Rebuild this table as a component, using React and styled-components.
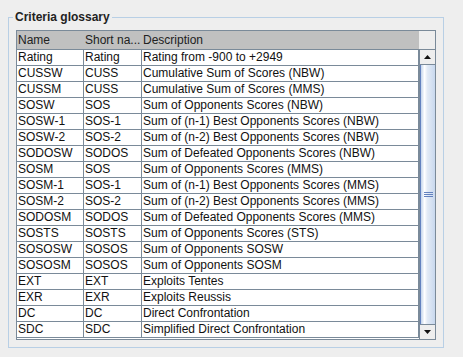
import React from "react";
import styled, { createGlobalStyle } from "styled-components";

const GlobalStyle = createGlobalStyle`
  html, body { margin: 0; padding: 0; background: #eeeeee; }
  body { font-family: "Liberation Sans", Arial, sans-serif; }
`;

const Page = styled.div`
  padding: 10px 0 0 8px;
`;

const Group = styled.fieldset`
  box-sizing: border-box;
  width: 436px;
  margin: 0;
  min-width: 0;
  border: 1px solid #b8cfe5;
  padding: 6px 7px 7px 7px;
`;

const Title = styled.legend`
  font: bold 12px/14px "Liberation Sans", Arial, sans-serif;
  color: #222;
  padding: 0 2px;
  margin-left: -3px;
`;

const ScrollPane = styled.div`
  display: grid;
  grid-template-columns: 402px 16px;
  grid-template-rows: 18px 290px;
  border: 1px solid #7a8a99;
  overflow: hidden;
`;

const Header = styled.div`
  display: grid;
  grid-template-columns: 67px 58px 1fr;
  background: #c0c0c0;
`;

const HeadCell = styled.div`
  font-size: 12px;
  line-height: 18px;
  color: #222;
  padding-left: 1px;
  white-space: nowrap;
  overflow: hidden;
`;

const Corner = styled.div`
  background: #eeeeee;
`;

const Body = styled.div`
  background: #ffffff;
  border-top: 1px solid #7a8a99;
  overflow: hidden;
`;

const Row = styled.div`
  display: grid;
  grid-template-columns: 67px 58px 1fr;
  height: 16px;
  box-sizing: border-box;
  border-bottom: 1px solid #7a8a99;
`;

const Cell = styled.div`
  font-size: 12px;
  line-height: 15px;
  color: #111;
  padding-left: 1px;
  border-right: 1px solid #7a8a99;
  white-space: nowrap;
  overflow: hidden;
`;

const ScrollBar = styled.div`
  display: flex;
  flex-direction: column;
  border-top: 1px solid #7a8a99;
  border-left: 1px solid #7a8a99;
  background: #eeeeee;
`;

const ArrowButton = styled.div`
  height: 15px;
  flex: none;
  box-sizing: border-box;
  display: flex;
  align-items: center;
  justify-content: center;
  background: #eeeeee;
  border-bottom: ${(p) => (p.$up ? "1px solid #7a8a99" : "none")};
  border-top: ${(p) => (p.$up ? "none" : "1px solid #7a8a99")};
`;

const Thumb = styled.div`
  flex: 1;
  box-sizing: border-box;
  border-left: 1px solid #6382bf;
  background: linear-gradient(to right, #c3d4ec 0%, #ffffff 25%, #e3ebf6 45%, #c8d8ee 100%);
  display: flex;
  align-items: center;
  justify-content: center;
`;

const Grip = styled.div`
  width: 9px;
  height: 5px;
  background: repeating-linear-gradient(to bottom, #6382bf 0 1px, transparent 1px 2px);
`;

const rows = [
  ["Rating", "Rating", "Rating from -900 to +2949"],
  ["CUSSW", "CUSS", "Cumulative Sum of Scores (NBW)"],
  ["CUSSM", "CUSS", "Cumulative Sum of Scores (MMS)"],
  ["SOSW", "SOS", "Sum of Opponents Scores (NBW)"],
  ["SOSW-1", "SOS-1", "Sum of (n-1) Best Opponents Scores (NBW)"],
  ["SOSW-2", "SOS-2", "Sum of (n-2) Best Opponents Scores (NBW)"],
  ["SODOSW", "SODOS", "Sum of Defeated Opponents Scores (NBW)"],
  ["SOSM", "SOS", "Sum of Opponents Scores (MMS)"],
  ["SOSM-1", "SOS-1", "Sum of (n-1) Best Opponents Scores (MMS)"],
  ["SOSM-2", "SOS-2", "Sum of (n-2) Best Opponents Scores (MMS)"],
  ["SODOSM", "SODOS", "Sum of Defeated Opponents Scores (MMS)"],
  ["SOSTS", "SOSTS", "Sum of Opponents Scores (STS)"],
  ["SOSOSW", "SOSOS", "Sum of Opponents SOSW"],
  ["SOSOSM", "SOSOS", "Sum of Opponents SOSM"],
  ["EXT", "EXT", "Exploits Tentes"],
  ["EXR", "EXR", "Exploits Reussis"],
  ["DC", "DC", "Direct Confrontation"],
  ["SDC", "SDC", "Simplified Direct Confrontation"],
];

const Triangle = ({ up }) => (
  <svg width="7" height="4" viewBox="0 0 7 4">
    <polygon points={up ? "3.5,0 7,4 0,4" : "0,0 7,0 3.5,4"} fill="#111" />
  </svg>
);

export default function App() {
  return (
    <>
      <GlobalStyle />
      <Page>
        <Group>
          <Title>Criteria glossary</Title>
          <ScrollPane>
            <Header>
              <HeadCell>Name</HeadCell>
              <HeadCell>Short na...</HeadCell>
              <HeadCell>Description</HeadCell>
            </Header>
            <Corner />
            <Body>
              {rows.map((r) => (
                <Row key={r[0]}>
                  <Cell>{r[0]}</Cell>
                  <Cell>{r[1]}</Cell>
                  <Cell>{r[2]}</Cell>
                </Row>
              ))}
            </Body>
            <ScrollBar>
              <ArrowButton $up>
                <Triangle up />
              </ArrowButton>
              <Thumb>
                <Grip />
              </Thumb>
              <ArrowButton>
                <Triangle />
              </ArrowButton>
            </ScrollBar>
          </ScrollPane>
        </Group>
      </Page>
    </>
  );
}
